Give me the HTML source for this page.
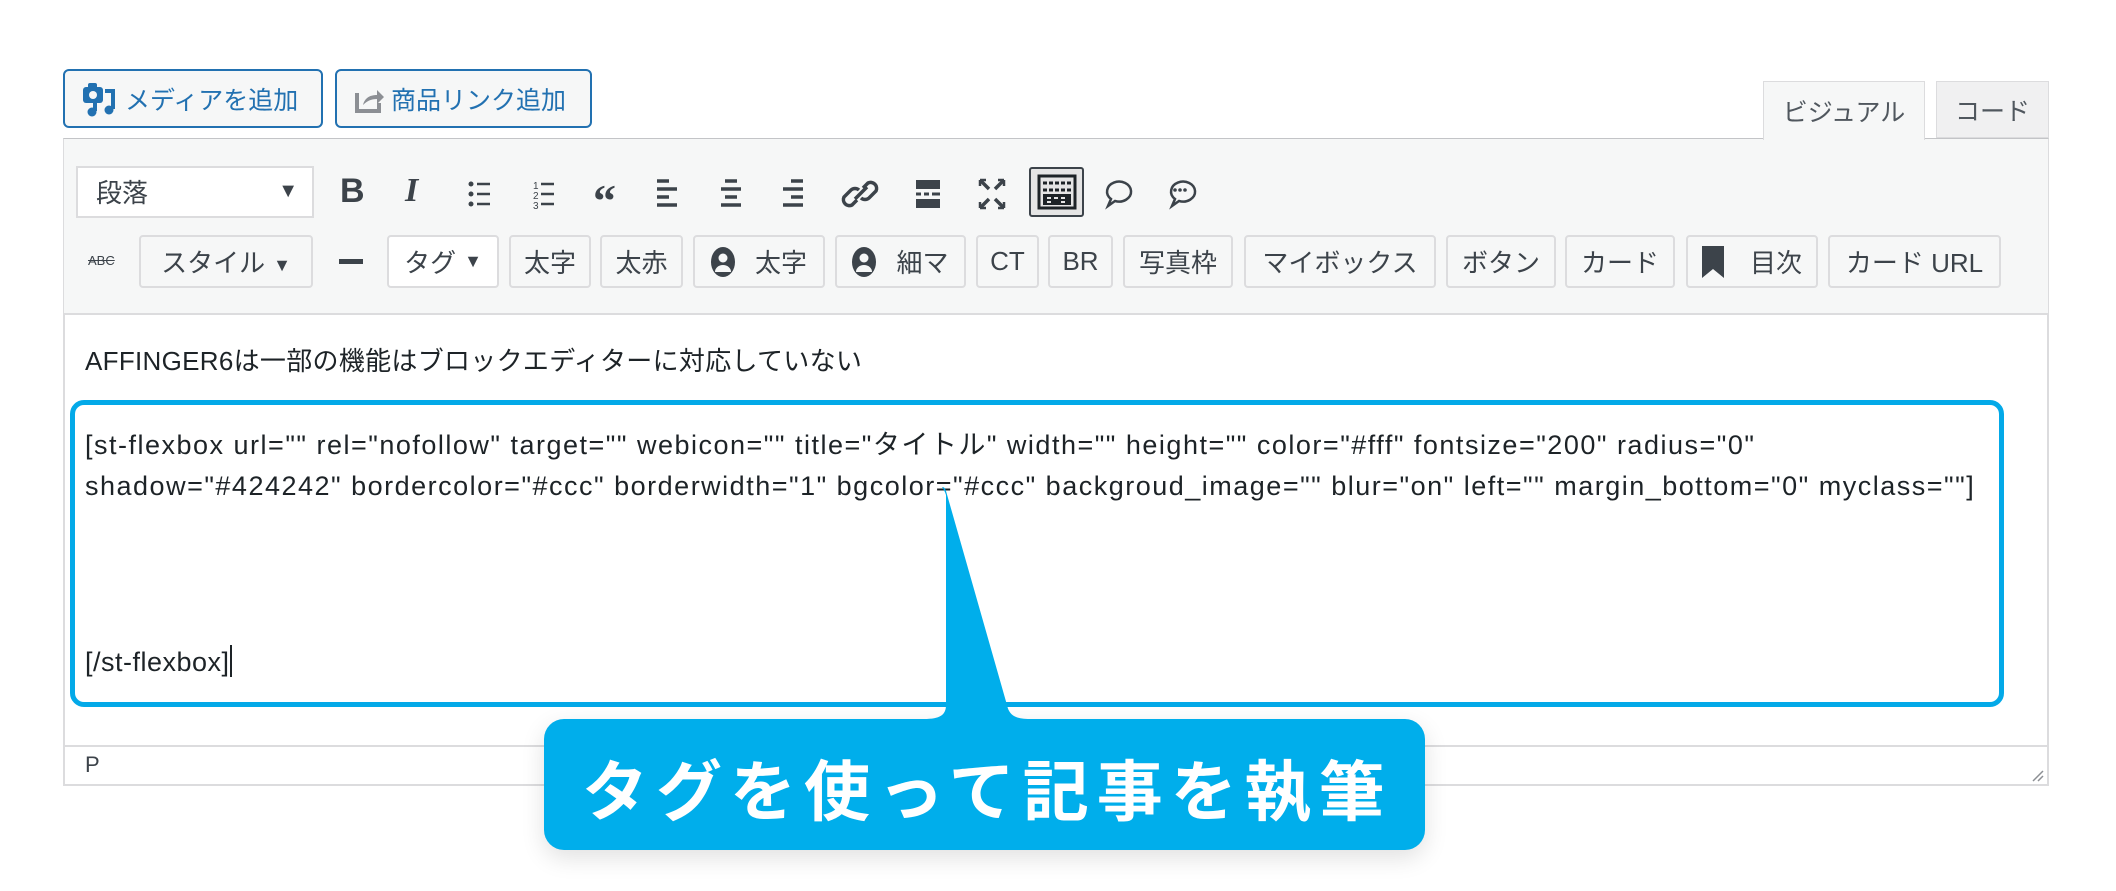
<!DOCTYPE html>
<html><head><meta charset="utf-8"><style>
*{box-sizing:border-box;margin:0;padding:0}
body{width:2116px;height:891px;background:#fff;position:relative;overflow:hidden;font-family:"Liberation Sans","Noto Sans CJK JP",sans-serif;color:#1d2327}
.abs{position:absolute}
.mb{position:absolute;top:69px;height:59px;border:2px solid #2271b1;border-radius:6px;background:#f6f7f7;color:#2271b1;font-size:25px;display:flex;align-items:center;padding-left:16px}
.tab{position:absolute;top:81px;height:57px;border:1px solid #dcdcde;font-size:25px;color:#50575e;display:flex;align-items:center;justify-content:center}
.btn{position:absolute;top:235px;height:53px;border:2px solid #dcdcde;border-radius:4px;background:#f6f7f7;font-size:26px;color:#3c434a;display:flex;align-items:center;justify-content:center;white-space:nowrap}
.ic{position:absolute;top:176px}
.txt{position:absolute;left:85px;font-size:24px;color:#1d2327;white-space:nowrap}
</style></head><body>
<div class="mb" style="left:63px;width:260px">
<svg width="34" height="36" viewBox="0 0 34 36" style="margin-right:10px"><rect x="2" y="6" width="20" height="16" rx="3" fill="#2271b1"/><rect x="7" y="2" width="9" height="6" rx="2" fill="#2271b1"/><circle cx="12" cy="14" r="4" fill="#f6f7f7"/><path d="M24 10h8v18" stroke="#2271b1" stroke-width="4" fill="none"/><circle cx="28" cy="29" r="4.5" fill="#2271b1"/><path d="M14 22v8" stroke="#2271b1" stroke-width="4"/><circle cx="11" cy="31" r="4.5" fill="#2271b1"/></svg>メディアを追加</div>
<div class="mb" style="left:335px;width:257px;padding-left:18px">
<svg width="30" height="28" viewBox="0 0 30 28" style="margin-right:6px"><path d="M2 8v18h22v-8" stroke="#8c8f94" stroke-width="4" fill="none"/><path d="M8 20c2-8 8-10 14-10V5l7 7-7 7v-5c-6 0-10 2-14 6z" fill="#8c8f94"/></svg>商品リンク追加</div>
<div class="tab" style="left:1936px;width:113px;background:#f0f0f1">コード</div>
<div class="abs" style="left:63px;top:138px;width:1986px;height:648px;border:2px solid #dcdcde;border-top-color:#c3c4c7;background:#fff"></div>
<div class="abs" style="left:64px;top:139px;width:1984px;height:176px;background:#f6f7f7;border-bottom:2px solid #dcdcde"></div>
<div class="tab" style="left:1763px;width:162px;background:#f6f7f7;border-bottom:none;height:59px">ビジュアル</div>
<!-- row1 -->
<div class="abs" style="left:76px;top:166px;width:238px;height:52px;background:#fff;border:2px solid #dcdcde;font-size:26px;color:#3c434a;padding:5px 0 0 18px">段落<span style="position:absolute;right:14px;top:12px;font-size:20px">▼</span></div>
<div class="abs" style="left:340px;top:172px;font-size:34px;font-weight:bold;color:#3c434a">B</div>
<div class="abs" style="left:405px;top:172px;font-size:34px;font-style:italic;font-family:'Liberation Serif',serif;font-weight:bold;color:#3c434a">I</div>
<svg class="ic" width="900" height="36" viewBox="0 0 900 36" style="left:460px">
<g fill="#3c434a" stroke="#3c434a">
<circle cx="11" cy="8" r="2.5" stroke="none"/><circle cx="11" cy="18" r="2.5" stroke="none"/><circle cx="11" cy="28" r="2.5" stroke="none"/>
<path d="M17 8h13M17 18h13M17 28h13" stroke-width="2.5" fill="none"/>
<text x="73" y="13" font-size="10" stroke="none">1</text><text x="73" y="23" font-size="10" stroke="none">2</text><text x="73" y="33" font-size="10" stroke="none">3</text>
<path d="M81 8h13M81 18h13M81 28h13" stroke-width="2.5" fill="none"/>
<text x="133" y="40" font-size="46" font-weight="bold" font-family="Liberation Serif" stroke="none">“</text>
<path d="M197 5h12M197 13h20M197 21h12M197 29h20" stroke-width="3.5" fill="none"/>
<path d="M265 5h12M261 13h20M265 21h12M261 29h20" stroke-width="3.5" fill="none"/>
<path d="M331 5h12M323 13h20M331 21h12M323 29h20" stroke-width="3.5" fill="none"/>
<path d="M397 24l-5 5a6 6 0 0 1-8-8l7-7a6 6 0 0 1 8 0M403 12l5-5a6 6 0 0 1 8 8l-7 7a6 6 0 0 1-8 0M395 23l12-12" stroke-width="3.5" fill="none"/>
<rect x="456" y="4" width="24" height="9" stroke="none"/><rect x="456" y="23" width="24" height="9" stroke="none"/><path d="M456 18h5M464 18h5M472 18h8" stroke-width="3" fill="none"/>
<path d="M521 5l8 8M543 5l-8 8M521 31l8-8M543 31l-8-8" stroke-width="3.5" fill="none"/><path d="M520 4h6M520 4v6M544 4h-6M544 4v6M520 32h6M520 32v-6M544 32h-6M544 32v-6" stroke-width="2.5"/>
</g></svg>
<div class="abs" style="left:1029px;top:167px;width:55px;height:50px;border:2px solid #3c434a;border-radius:3px;background:#e5e5e5"></div>
<svg class="abs" width="40" height="36" viewBox="0 0 40 36" style="left:1037px;top:174px"><rect x="2" y="2" width="36" height="32" fill="none" stroke="#1d2327" stroke-width="3"/><path d="M6 9h28M6 16h28" stroke="#1d2327" stroke-width="3" stroke-dasharray="4 2"/><rect x="6" y="20" width="28" height="11" fill="#1d2327"/><path d="M10 24h4M17 24h4M24 24h4M10 28h4M24 28h4" stroke="#e5e5e5" stroke-width="2"/></svg>
<svg class="abs" width="36" height="36" viewBox="0 0 36 36" style="left:1099px;top:176px"><path d="M9 30l3-7a12 10 0 1 1 4 2z" fill="none" stroke="#3c434a" stroke-width="2.5"/></svg>
<svg class="abs" width="36" height="36" viewBox="0 0 36 36" style="left:1163px;top:176px"><path d="M9 30l3-7a12 10 0 1 1 4 2z" fill="none" stroke="#3c434a" stroke-width="2.5"/><circle cx="12" cy="14" r="1.8" fill="#3c434a"/><circle cx="17" cy="14" r="1.8" fill="#3c434a"/><circle cx="22" cy="14" r="1.8" fill="#3c434a"/></svg>
<!-- row2 -->
<div class="abs" style="left:88px;top:253px;font-size:13px;color:#3c434a;text-decoration:line-through">ABC</div>
<div class="btn" style="left:139px;width:174px">スタイル<span style="font-size:18px;margin:8px 0 0 8px">▼</span></div>
<div class="abs" style="left:339px;top:259px;width:24px;height:5px;background:#3c434a"></div>
<div class="btn" style="left:387px;width:112px;background:#fff">タグ<span style="font-size:18px;margin-left:8px">▼</span></div>
<div class="btn" style="left:509px;width:82px">太字</div>
<div class="btn" style="left:600px;width:83px">太赤</div>
<div class="btn" style="left:693px;width:132px"><svg width="24" height="30" viewBox="0 0 24 30" style="margin-right:20px"><ellipse cx="12" cy="15" rx="12" ry="15" fill="#3c434a"/><circle cx="12" cy="11" r="4.5" fill="#f6f7f7"/><path d="M4 25a8 7 0 0 1 16 0" fill="#f6f7f7"/></svg>太字</div>
<div class="btn" style="left:835px;width:131px"><svg width="24" height="30" viewBox="0 0 24 30" style="margin-right:20px"><ellipse cx="12" cy="15" rx="12" ry="15" fill="#3c434a"/><circle cx="12" cy="11" r="4.5" fill="#f6f7f7"/><path d="M4 25a8 7 0 0 1 16 0" fill="#f6f7f7"/></svg>細マ</div>
<div class="btn" style="left:976px;width:63px">CT</div>
<div class="btn" style="left:1048px;width:65px">BR</div>
<div class="btn" style="left:1123px;width:110px">写真枠</div>
<div class="btn" style="left:1244px;width:192px">マイボックス</div>
<div class="btn" style="left:1446px;width:110px">ボタン</div>
<div class="btn" style="left:1565px;width:110px">カード</div>
<div class="btn" style="left:1686px;width:132px"><svg width="22" height="32" viewBox="0 0 22 32" style="margin-right:26px"><path d="M0 0h22v32l-11-9-11 9z" fill="#3c434a"/></svg>目次</div>
<div class="btn" style="left:1828px;width:173px">カード URL</div>
<!-- content -->
<div class="txt" style="top:341px;font-size:26px;letter-spacing:0.3px">AFFINGER6は一部の機能はブロックエディターに対応していない</div>
<div class="abs" style="left:70px;top:400px;width:1934px;height:307px;border:5px solid #03a9e8;border-radius:14px"></div>
<div class="txt" style="top:423px;font-size:27px;letter-spacing:1.5px">[st-flexbox url="" rel="nofollow" target="" webicon="" title="タイトル" width="" height="" color="#fff" fontsize="200" radius="0"</div>
<div class="txt" style="top:471px;font-size:27px;letter-spacing:1.5px">shadow="#424242" bordercolor="#ccc" borderwidth="1" bgcolor="#ccc" backgroud_image="" blur="on" left="" margin_bottom="0" myclass=""]</div>
<div class="txt" style="top:645px;font-size:27px;letter-spacing:0.5px">[/st-flexbox]<span style="display:inline-block;width:2px;height:32px;background:#1d2327;vertical-align:-6px"></span></div>
<div class="abs" style="left:64px;top:745px;width:1984px;height:2px;background:#dcdcde"></div>
<div class="txt" style="top:752px;font-size:22px;color:#3c434a">P</div>
<svg class="abs" width="14" height="14" style="left:2030px;top:768px"><path d="M13 3L3 13M13 8L8 13" stroke="#8c8f94" stroke-width="1.5"/></svg>
<!-- callout -->
<div class="abs" style="left:544px;top:719px;width:881px;height:131px;background:#00aeeb;border-radius:20px;box-shadow:0 8px 24px rgba(0,0,0,.12)"></div>
<svg class="abs" width="120" height="240" viewBox="0 0 120 240" style="left:920px;top:485px"><path d="M22 2C24 2 25 3 26 6L87 220C89 230 95 234 110 234L4 234C20 234 26 230 26 220L26 10C24 4 22 2 22 2Z" fill="#00aeeb"/></svg>
<div class="abs" style="left:582px;top:742px;font-size:66px;font-weight:bold;color:#fff;letter-spacing:8px;white-space:nowrap;font-family:'Noto Sans CJK JP',sans-serif;line-height:90px">タグを使って記事を執筆</div>
</body></html>
